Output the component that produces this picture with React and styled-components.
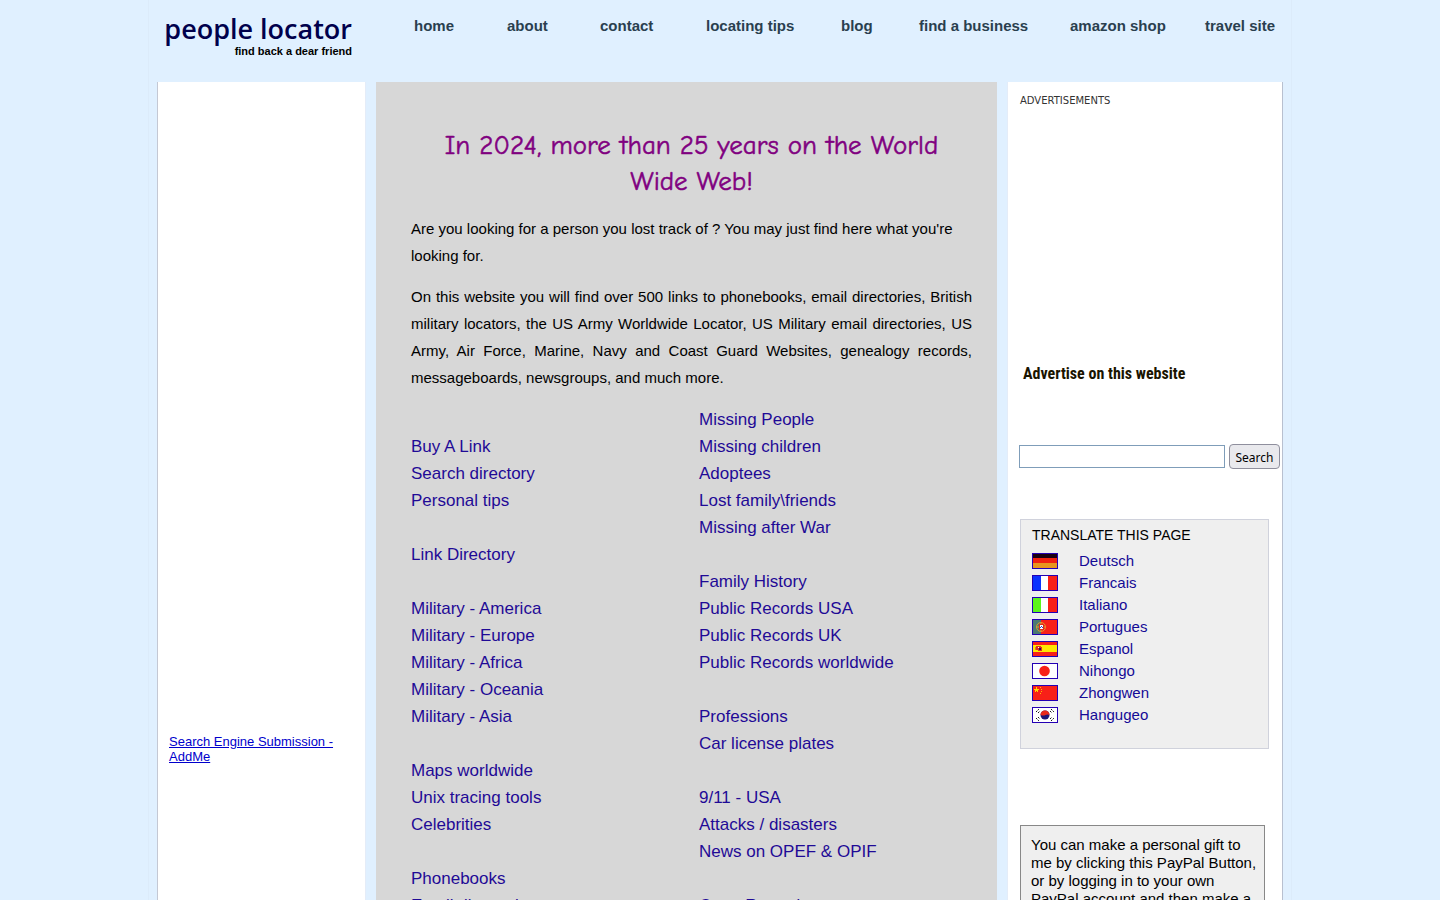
import React from "react"
import styled, { createGlobalStyle } from 'styled-components'

const NAV = ['home', 'about', 'contact', 'locating tips', 'blog', 'find a business', 'amazon shop', 'travel site']

// empty strings are the blank lines between groups
const LEFT_LINKS = [
  '', 'Buy A Link', 'Search directory', 'Personal tips', '', 'Link Directory', '',
  'Military - America', 'Military - Europe', 'Military - Africa', 'Military - Oceania', 'Military - Asia', '',
  'Maps worldwide', 'Unix tracing tools', 'Celebrities', '', 'Phonebooks', 'Email directories',
]

const RIGHT_LINKS = [
  'Missing People', 'Missing children', 'Adoptees', 'Lost family\\friends', 'Missing after War', '',
  'Family History', 'Public Records USA', 'Public Records UK', 'Public Records worldwide', '',
  'Professions', 'Car license plates', '', '9/11 - USA', 'Attacks / disasters', 'News on OPEF & OPIF', '',
  'Court Records',
]

const FLAGS = {
  de: <>
    <rect width="24" height="5" fill="#1c0010" />
    <rect y="4" width="24" height="5" fill="#f0200f" />
    <rect y="9" width="24" height="5" fill="#e8961e" />
  </>,
  fr: <>
    <rect width="8" height="14" fill="#0a32ff" />
    <rect x="8" width="7" height="14" fill="#fff" />
    <rect x="15" width="9" height="14" fill="#f82018" />
  </>,
  it: <>
    <rect width="8" height="14" fill="#5cf51c" />
    <rect x="8" width="7" height="14" fill="#fff" />
    <rect x="15" width="9" height="14" fill="#f82018" />
  </>,
  pt: <>
    <rect width="24" height="14" fill="#f82018" />
    <rect width="8" height="14" fill="#4d7a72" />
    <circle cx="8" cy="7" r="4.5" fill="none" stroke="#e09a2c" />
    <path d="M4 7h8M8 3v8" stroke="#e09a2c" />
    <rect x="6" y="4" width="5" height="6" fill="#e02a18" />
    <rect x="7" y="5" width="3" height="4" fill="#fff" />
    <path d="M8 6h1v1h-1zM7 7h1v1h-1zM9 7h1v1h-1z" fill="#2b4ac4" />
  </>,
  es: <>
    <rect width="24" height="14" fill="#f82018" />
    <rect y="3" width="24" height="7" fill="#ffe600" />
    <path d="M2 5h1v3h-1z" fill="#c98a20" />
    <path d="M3 4h5v1h1v4h-4v-1h-2z" fill="#e0301c" />
    <path d="M6 6h2v2h-2z" fill="#241050" />
    <path d="M5 5h1v1h-1z" fill="#fff" />
  </>,
  jp: <>
    <rect width="24" height="14" fill="#fff" />
    <circle cx="11.5" cy="7" r="5.3" fill="#f82018" />
  </>,
  cn: <>
    <rect width="24" height="14" fill="#f82018" />
    <path d="M3 1h1v2h2v1h-1v2h-1v-1h-1v1h-1v-2h-1v-1h2z" fill="#ffd800" />
    <path d="M7 1h1v1h-1zM8 3h1v1h-1zM8 5h1v1h-1zM7 7h1v1h-1z" fill="#ffb800" />
  </>,
  kr: <>
    <rect width="24" height="14" fill="#fff" />
    <path d="M3 4l3-3M5 5l2-2M3 10l3 3M5 9l2 2M18 1l3 3M17 3l2 2M18 13l3-3M17 11l2-2" stroke="#181818" strokeDasharray="2 1" />
    <circle cx="12" cy="7" r="4.5" fill="#1c1478" />
    <path d="M7.5 7a4.5 4.5 0 0 1 9 0q-2-1-4 0t-5 0z" fill="#e8281c" />
  </>,
}

const LANGUAGES = [
  ['de', 'Deutsch'], ['fr', 'Francais'], ['it', 'Italiano'], ['pt', 'Portugues'],
  ['es', 'Espanol'], ['jp', 'Nihongo'], ['cn', 'Zhongwen'], ['kr', 'Hangugeo'],
]

const LinkColumn = ({ items }) => (
  <LinkList>
    {items.map((text, i) => (
      <li key={i}>{text && <DirectoryLink href="#">{text}</DirectoryLink>}</li>
    ))}
  </LinkList>
)

const App = () => (
  <>
    <GlobalStyle />
    <Page>
      <Header>
        <Brand href="#">
          <BrandName>people locator</BrandName>
          <Tagline>find back a dear friend</Tagline>
        </Brand>
        <Nav>
          {NAV.map(item => <NavLink key={item} href="#">{item}</NavLink>)}
        </Nav>
      </Header>

      <Columns>
        <LeftPanel>
          <AddMeLink href="#">Search Engine Submission - AddMe</AddMeLink>
        </LeftPanel>

        <Main>
          <Title>In 2024, more than 25 years on the World Wide Web!</Title>
          <Paragraph>
            Are you looking for a person you lost track of ? You may just find here what you're looking for.
          </Paragraph>
          <Paragraph $justify>
            On this website you will find over 500 links to phonebooks, email directories, British
            military locators, the US Army Worldwide Locator, US Military email directories, US
            Army, Air Force, Marine, Navy and Coast Guard Websites, genealogy records,
            messageboards, newsgroups, and much more.
          </Paragraph>
          <Directory>
            <LinkColumn items={LEFT_LINKS} />
            <LinkColumn items={RIGHT_LINKS} />
          </Directory>
        </Main>

        <RightPanel>
          <AdArea>
            <AdLabel>ADVERTISEMENTS</AdLabel>
          </AdArea>
          <AdvertiseLink href="#">Advertise on this website</AdvertiseLink>
          <SearchForm onSubmit={e => e.preventDefault()}>
            <SearchInput type="text" aria-label="Search" />
            <SearchButton type="submit">Search</SearchButton>
          </SearchForm>
          <TranslateBox>
            <TranslateTitle>TRANSLATE THIS PAGE</TranslateTitle>
            {LANGUAGES.map(([code, name]) => (
              <LanguageLink key={code} href="#">
                <Flag viewBox="0 0 24 14" preserveAspectRatio="none" aria-hidden="true">{FLAGS[code]}</Flag>
                {name}
              </LanguageLink>
            ))}
          </TranslateBox>
          <GiftBox>
            You can make a personal gift to me by clicking this PayPal Button, or by logging in to your own
            PayPal account and then make a payment.
          </GiftBox>
        </RightPanel>
      </Columns>
    </Page>
  </>
)

const GlobalStyle = createGlobalStyle`
  * {
    box-sizing: border-box;
  }

  body {
    margin: 0;
    background: #e0f0ff;
    color: #000;
    font-family: Arial, "Liberation Sans", sans-serif;
    font-size: 15px;
  }
`

const Page = styled.div`
  display: flex;
  flex-direction: column;
  max-width: 1144px;
  min-height: 100vh;
  margin: 0 auto;
  padding: 0 8px;
  border: solid #dcebfa;
  border-width: 0 1px;
`

const Header = styled.header`
  display: flex;
  height: 82px;
  padding-left: 6px;
`

const Brand = styled.a`
  display: flex;
  flex-direction: column;
  align-items: flex-end;
  width: 189px;
  padding-top: 13px;
  color: #000;
  text-decoration: none;
  white-space: nowrap;
`

const BrandName = styled.span`
  color: #00004c;
  font-family: "Trebuchet MS", "Open Sans", sans-serif;
  font-size: 27px;
  font-weight: 600;
  line-height: 32px;
`

const Tagline = styled.span`
  font-size: 11px;
  font-weight: bold;
  line-height: 12px;
`

const Nav = styled.nav`
  display: grid;
  flex: 1;
  grid-template-columns: 93fr 93fr 106fr 135fr 78fr 151fr 135fr 78fr;
  padding-left: 62px;
  padding-top: 16px;
`

const NavLink = styled.a`
  color: #2a3f4f;
  font-weight: bold;
  line-height: 20px;
  text-decoration: none;
  white-space: nowrap;
`

const Columns = styled.div`
  display: grid;
  flex: 1;
  grid-template-columns: 209px minmax(0, 1fr) 276px;
  gap: 10px;
`

const LeftPanel = styled.aside`
  padding: 652px 20px 0 11px;
  border-left: 1px solid #c4c8d4;
  border-right: 1px solid #e4ecf8;
  background: #fff;
`

const AddMeLink = styled.a`
  display: block;
  color: #0000cc;
  font-size: 13px;
  line-height: 15px;
`

const Main = styled.main`
  padding: 46px 25px 20px 35px;
  background: #d7d7d7;
`

const Title = styled.h1`
  margin: 0 0 15px;
  padding: 0 20px;
  color: #800080;
  font-family: "Comic Sans MS", "Comic Neue", Lato, sans-serif;
  font-size: 27px;
  font-weight: normal;
  line-height: 36px;
  text-align: center;
  -webkit-text-stroke: 0.5px #800080;
`

const Paragraph = styled.p`
  margin: 0 0 14px;
  line-height: 27px;
  text-align: ${({ $justify }) => $justify ? 'justify' : 'left'};
`

const Directory = styled.div`
  display: grid;
  grid-template-columns: 288fr 273fr;
  padding-top: 1px;
`

const LinkList = styled.ul`
  margin: 0;
  padding: 0;
  list-style: none;

  li {
    height: 27px;
    line-height: 27px;
  }
`

const DirectoryLink = styled.a`
  color: #1f0a96;
  font-size: 17px;
  text-decoration: none;
`

const RightPanel = styled.aside`
  display: flex;
  flex-direction: column;
  align-items: flex-start;
  padding: 12px 2px 20px 11px;
  border-left: 1px solid #e4ecf8;
  border-right: 1px solid #b8c0d0;
  background: #fff;
`

const AdArea = styled.section`
  height: 268px;
  padding-left: 1px;
`

const AdLabel = styled.div`
  color: #333;
  font-family: Verdana, "DejaVu Sans", sans-serif;
  font-size: 10px;
  line-height: 13px;
`

const AdvertiseLink = styled.a`
  padding-left: 4px;
  color: #1a1400;
  font-family: "Roboto Condensed", Roboto, sans-serif;
  font-size: 16px;
  font-weight: bold;
  line-height: 24px;
  text-decoration: none;
  white-space: nowrap;
`

const SearchForm = styled.form`
  display: flex;
  align-items: center;
  gap: 4px;
  width: 100%;
  margin-top: 58px;
`

const SearchInput = styled.input`
  flex: 1;
  min-width: 0;
  height: 23px;
  padding: 1px 4px;
  border: 1px solid #7f9db9;
  background: #fff;
  font: inherit;
`

const SearchButton = styled.button`
  width: 51px;
  height: 25px;
  padding: 2px 0 0;
  border: 1px solid #8f8f9d;
  border-radius: 4px;
  background: #e9e9ed;
  color: #000;
  font-family: "Noto Sans", sans-serif;
  font-size: 12px;
`

const TranslateBox = styled.section`
  width: 249px;
  min-height: 230px;
  margin: 50px 0 0 1px;
  padding: 5px 11px;
  border: 1px solid #d0d2dc;
  background: #efefef;
`

const TranslateTitle = styled.div`
  margin-bottom: 5px;
  font-size: 14px;
  line-height: 20px;
`

const LanguageLink = styled.a`
  display: flex;
  align-items: center;
  gap: 21px;
  color: #140a96;
  line-height: 22px;
  text-decoration: none;
`

const Flag = styled.svg`
  width: 26px;
  height: 16px;
  border: 1px solid #2400b4;
`

const GiftBox = styled.section`
  width: 245px;
  margin: 76px 0 0 1px;
  padding: 10px 4px 10px 10px;
  border: 1px solid #888;
  background: #efefef;
  line-height: 18px;
`

export default App
